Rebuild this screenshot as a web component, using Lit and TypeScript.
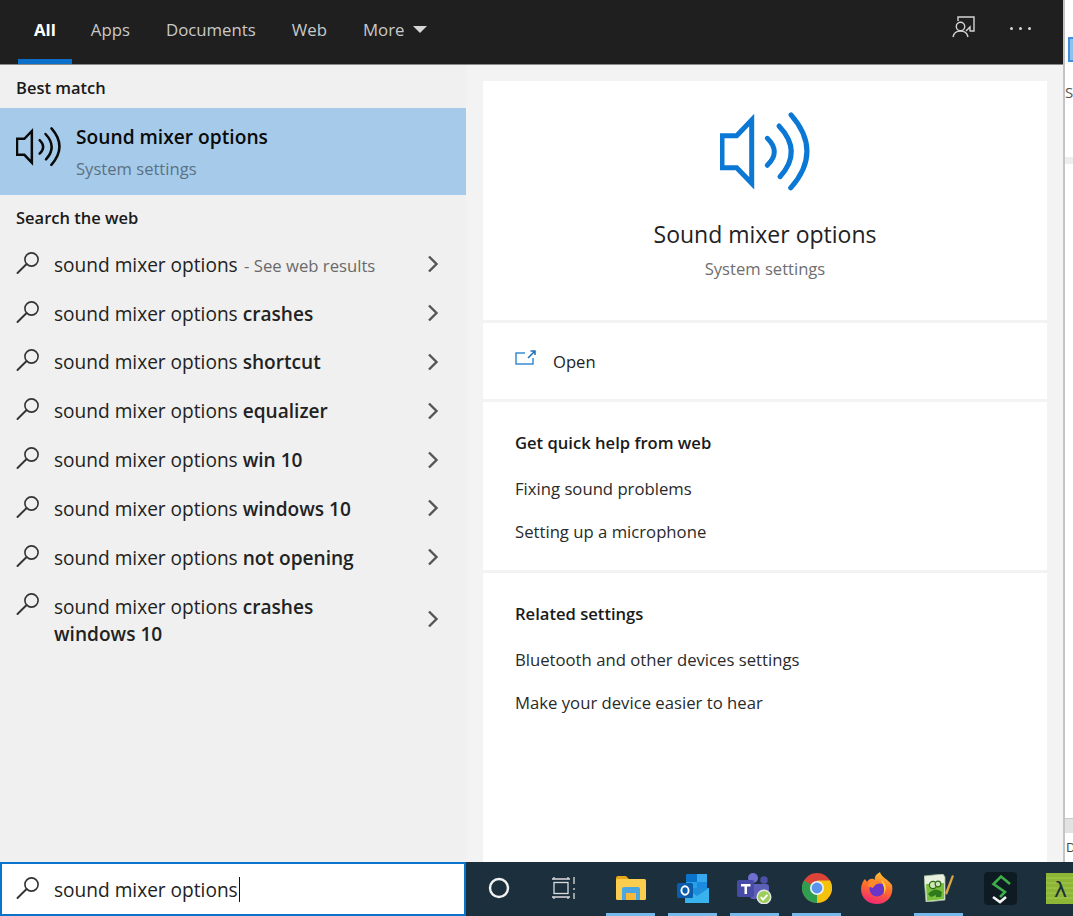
import {LitElement, html, css, svg} from 'lit';
import {customElement} from 'lit/decorators.js';

const webRows = [
  {plain: 'sound mixer options', bold: '', hint: ' - See web results'},
  {plain: 'sound mixer options ', bold: 'crashes'},
  {plain: 'sound mixer options ', bold: 'shortcut'},
  {plain: 'sound mixer options ', bold: 'equalizer'},
  {plain: 'sound mixer options ', bold: 'win 10'},
  {plain: 'sound mixer options ', bold: 'windows 10'},
  {plain: 'sound mixer options ', bold: 'not opening'},
];

const lens = svg`<circle cx="15.5" cy="8.5" r="6.6" fill="none" stroke="currentColor" stroke-width="1.6"/><path d="M10.6 13 L1.5 22" fill="none" stroke="currentColor" stroke-width="1.9" stroke-linecap="round"/>`;

// traced from the big blue one, the small black one is the same at half size
const speaker = svg`<g fill="none" stroke="currentColor" stroke-width="5" stroke-linecap="round">
  <path d="M2 23.7 H16.7 L31.7 8 V71.3 L16.7 55.7 H2 Z" stroke-linejoin="miter"/>
  <path d="M47.3 26.3 Q61.3 39.8 47.3 53.3"/>
  <path d="M59 14 Q83 39.5 60 64.7"/>
  <path d="M71 2.8 Q103 39.3 70.7 75.8"/>
</g>`;

@customElement('app-root')
export class AppRoot extends LitElement {
  static styles = css`
    :host {
      display: grid;
      width: 1073px;
      height: 916px;
      overflow: hidden;
      grid-template-columns: 466px 597px 10px;
      grid-template-rows: 65px 797px 54px;
      font-family: "Open Sans", "Noto Sans", sans-serif;
      color: #1a1a1a;
      background: #f2f2f2;
    }
    svg { display: block; flex: none; }

    /* top bar */
    .top {
      grid-column: 1 / 3;
      grid-row: 1;
      background: #1f1f1f;
      border-bottom: 1px solid #8a8a8a;
      box-sizing: border-box;
      display: flex;
      align-items: stretch;
      padding-left: 18px;
      color: #c9c9c9;
      font-size: 16.8px;
    }
    .tab { padding: 0 18px; display: flex; align-items: center; gap: 8px; padding-bottom: 6px; box-sizing: border-box; }
    .tab.on {
      padding-left: 16px;
      padding-right: 16px;
      margin-right: 1px;
      color: #fff;
      font-weight: 700;
      border-bottom: 5px solid #0a6fc9;
      padding-bottom: 1px;
    }
    .caret { width: 0; height: 0; border-left: 7px solid transparent; border-right: 7px solid transparent; border-top: 7px solid #d6d6d6; }
    .top-actions { margin-left: auto; display: flex; align-items: center; gap: 34px; padding: 0 32px 8px 0; }
    .dots { display: flex; gap: 6px; }
    .dots i { width: 3px; height: 3px; border-radius: 50%; background: #d6d6d6; }

    /* left list */
    .left { grid-column: 1; grid-row: 2; background: #f0f0f0; display: flex; flex-direction: column; }
    .heading { font-size: 16.5px; font-weight: 600; height: 43px; line-height: 45px; padding-left: 16px; color: #1a1a1a; }
    .heading.web { height: 45px; line-height: 45px; }
    .best { height: 87px; background: #a6cbea; display: flex; padding-left: 16px; color: #0a0a0a; }
    .best svg { margin-top: 19px; }
    .best-text { margin-left: 15px; padding-top: 15px; }
    .best-title { font-size: 19.2px; font-weight: 600; line-height: 28px; }
    .best-sub { font-size: 16.6px; line-height: 28px; margin-top: 4px; color: #5b7183; }
    .row { height: 48.8px; display: flex; align-items: center; padding: 0 27px 0 16px; font-size: 19.1px; color: #222; }
    .row.tall { height: 78px; line-height: 27px; }
    .row .lens { color: #333; margin-right: 14px; width: 24px; height: 24px; margin-top: -3px; }
    .row.tall .lens { align-self: flex-start; margin-top: 10px; }
    .row.tall .chev { margin-top: -3px; }
    .row span.label { flex: 1; padding-top: 1px; }
    .row b { font-weight: 600; }
    .row .hint { font-size: 16.7px; color: #6a6a6a; padding-left: 2px; }
    .chev { color: #555; }

    /* right preview */
    .right {
      grid-column: 2;
      grid-row: 2;
      background: #f3f3f3;
      padding: 16px 16px 0 17px;
      display: flex;
      flex-direction: column;
      gap: 3px;
    }
    .card { background: #fff; padding-left: 32px; }
    .hero { height: 239px; padding: 0; box-sizing: border-box; display: flex; flex-direction: column; align-items: center; }
    .hero svg { margin-top: 31px; color: #0a78d4; }
    .hero-title { font-size: 23px; line-height: 32px; margin-top: 26px; color: #222; }
    .hero-sub { font-size: 16.6px; line-height: 24px; margin-top: 7px; color: #6e6e6e; }
    .open { height: 76px; display: flex; align-items: center; gap: 17px; font-size: 16.6px; color: #222; }
    .open svg { color: #3a8dd3; margin-top: -7px; }
    .block { height: 168px; box-sizing: border-box; padding-top: 28px; }
    .block.grow { flex: 1; }
    .block h3 { margin: 0; font-size: 16.6px; line-height: 26px; font-weight: 600; color: #1a1a1a; }
    .block p { margin: 0; font-size: 16.7px; line-height: 26px; padding-top: 17px; color: #2a2a2a; }
    .block h3 + p { padding-top: 20px; }

    /* peek of the window behind */
    .peek {
      grid-column: 3;
      grid-row: 1 / 3;
      background: #fff;
      border-left: 2px solid #c4c4c4;
      box-sizing: border-box;
      display: flex;
      flex-direction: column;
      overflow: hidden;
      font-size: 15px;
      color: #555;
    }
    .peek-box { margin: 37px 0 0 3px; height: 25px; background: #8fc0ee; border: 2px solid #3f8fdc; border-right: 0; box-sizing: border-box; }
    .peek-text { margin-top: 20px; line-height: 20px; white-space: nowrap; }
    .peek-line { margin-top: 55px; height: 7px; background: #ededed; }
    .peek-band { margin-top: auto; height: 15px; background: #e2e2e2; border-top: 1px solid #c9c9c9; box-sizing: border-box; }
    .peek-end { height: 29px; line-height: 28px; font-size: 13px; white-space: nowrap; padding-left: 1px; color: #444; }

    /* search box and taskbar */
    .search {
      grid-column: 1;
      grid-row: 3;
      background: #fff;
      border: 2px solid #0a74cd;
      box-sizing: border-box;
      display: flex;
      align-items: center;
      padding-left: 14px;
      font-size: 19.1px;
      color: #222;
    }
    .search .lens { color: #333; margin-right: 14px; width: 24px; height: 24px; margin-top: -3px; }
    .search-text { padding-top: 1px; }
    .caret-bar { width: 1.5px; height: 25px; background: #111; margin-left: 1px; }
    .taskbar {
      grid-column: 2 / 4;
      grid-row: 3;
      background: #1c2f3d;
      display: flex;
      box-sizing: border-box;
      padding-left: 2px;
    }
    .slot { width: 62px; height: 54px; display: flex; align-items: center; justify-content: center; box-sizing: border-box; flex: none; padding-top: 1px; border-bottom: 3px solid transparent; }
    .slot.on { border-bottom-color: #76b9ed; width: 49px; margin: 0 6.5px; }
    .slot.cortana { margin-right: 3px; }
    .slot.tasks { margin-right: 4.5px; }
    .slot.firefox { margin-left: -2px; }
    .slot.lambda { justify-content: flex-start; padding-left: 14px; width: 40px; }
  `;

  render() {
    return html`
      <div class="top">
        <div class="tab on">All</div>
        <div class="tab">Apps</div>
        <div class="tab">Documents</div>
        <div class="tab">Web</div>
        <div class="tab">More<span class="caret"></span></div>
        <div class="top-actions">
          <svg width="24" height="24" viewBox="0 0 24 24" fill="none" stroke="#d4d4d4" stroke-width="1.4">
            <path d="M6 5 V1 H22 V15 H17.5 M14 15 L18 11 V15"/>
            <circle cx="8.5" cy="10.5" r="4.2"/>
            <path d="M1 21 C2 16 5 15 8.5 15 C12 15 15 16 16 21"/>
          </svg>
          <div class="dots"><i></i><i></i><i></i></div>
        </div>
      </div>

      <div class="left">
        <div class="heading">Best match</div>
        <div class="best">
          <svg width="45" height="40" viewBox="0 0 90 80">${speaker}</svg>
          <div class="best-text">
            <div class="best-title">Sound mixer options</div>
            <div class="best-sub">System settings</div>
          </div>
        </div>
        <div class="heading web">Search the web</div>
        ${webRows.map(r => html`
          <div class="row">
            <svg class="lens" viewBox="0 0 24 24">${lens}</svg>
            <span class="label">${r.plain}${r.bold ? html`<b>${r.bold}</b>` : ''}${r.hint ? html`<span class="hint">${r.hint}</span>` : ''}</span>
            ${this.chevron()}
          </div>`)}
        <div class="row tall">
          <svg class="lens" viewBox="0 0 24 24">${lens}</svg>
          <span class="label">sound mixer options <b>crashes<br>windows 10</b></span>
          ${this.chevron()}
        </div>
      </div>

      <div class="right">
        <div class="card hero">
          <svg width="90" height="80" viewBox="0 0 90 80">${speaker}</svg>
          <div class="hero-title">Sound mixer options</div>
          <div class="hero-sub">System settings</div>
        </div>
        <div class="card open">
          <svg width="21" height="16" viewBox="0 0 21 16" fill="none" stroke="currentColor" stroke-width="1.5">
            <path d="M10 3 H1 V14 H18 V8"/>
            <path d="M13 8 L20 1 M15.5 1 H20 V5" stroke="#1f6fb8"/>
          </svg>
          Open
        </div>
        <div class="card block">
          <h3>Get quick help from web</h3>
          <p>Fixing sound problems</p>
          <p>Setting up a microphone</p>
        </div>
        <div class="card block grow">
          <h3>Related settings</h3>
          <p>Bluetooth and other devices settings</p>
          <p>Make your device easier to hear</p>
        </div>
      </div>

      <div class="peek">
        <div class="peek-box"></div>
        <div class="peek-text">SI</div>
        <div class="peek-line"></div>
        <div class="peek-band"></div>
        <div class="peek-end">D</div>
      </div>

      <div class="search">
        <svg class="lens" viewBox="0 0 24 24">${lens}</svg>
        <span class="search-text">sound mixer options</span><span class="caret-bar"></span>
      </div>

      <div class="taskbar">
        <div class="slot cortana"><svg width="22" height="22" viewBox="0 0 22 22"><circle cx="11" cy="11" r="9" fill="none" stroke="#f2f2f2" stroke-width="2.4"/></svg></div>
        <div class="slot tasks">
          <svg width="26" height="24" viewBox="0 0 26 24" fill="none" stroke="#dcdcdc" stroke-width="1.3">
            <path d="M1 3 H19 M3 1 V3 M17 1 V3 M1 21 H19 M3 21 V23 M17 21 V23"/>
            <rect x="3" y="6.5" width="14" height="11"/>
            <path d="M23 1 V8 M23 12 V14 M23 17 V23"/>
          </svg>
        </div>
        <div class="slot on">
          <svg width="30" height="24" viewBox="0 0 30 24">
            <path d="M0 2 a2 2 0 0 1 2-2 H10 L13 3 H28 V8 H0 Z" fill="#e6a817"/>
            <rect x="0" y="3" width="30" height="21" rx="1.5" fill="#fbcd4f"/>
            <path d="M6 24 V13 a2 2 0 0 1 2-2 H22 a2 2 0 0 1 2 2 V24 H20 V17 H10 V24 Z" fill="#4aa6e0"/>
            <rect x="10" y="17" width="10" height="7" fill="#f6b73c"/>
          </svg>
        </div>
        <div class="slot on">
          <svg width="32" height="29" viewBox="0 0 32 29">
            <rect x="9" y="0" width="21" height="17" rx="1" fill="#0a74cd"/>
            <rect x="20" y="0" width="10" height="8" fill="#36a8eb"/>
            <rect x="9" y="8" width="11" height="9" fill="#28a0e5"/>
            <rect x="20" y="8" width="10" height="9" fill="#1a8be0"/>
            <path d="M8 14 L32 14 V28 a1 1 0 0 1-1 1 H9 a1 1 0 0 1-1-1 Z" fill="#1f8fdb"/>
            <path d="M8 14 L20 22 L32 14 V29 H8 Z" fill="#39b3ee"/>
            <rect x="0" y="9" width="16" height="15" rx="1.5" fill="#0b5cab"/>
            <ellipse cx="8" cy="16.5" rx="3.6" ry="4.2" fill="none" stroke="#fff" stroke-width="1.9"/>
          </svg>
        </div>
        <div class="slot on">
          <svg width="35" height="31" viewBox="0 0 35 31">
            <circle cx="16" cy="5" r="5" fill="#6f6fd0"/>
            <circle cx="27" cy="7" r="3.8" fill="#4e4fa6"/>
            <rect x="13" y="11" width="19" height="15" rx="3" fill="#5d5fb8"/>
            <rect x="0" y="7" width="17" height="17" rx="2" fill="#484aa8"/>
            <path d="M4 11 H13.5 V13.4 H10 V21 H7.5 V13.4 H4 Z" fill="#fff"/>
            <circle cx="27" cy="24" r="6.8" fill="#9ccf5a" stroke="#e6e6e6" stroke-width="1.4"/>
            <path d="M23.8 24 L26 26.6 L30.4 21.8" fill="none" stroke="#fff" stroke-width="1.9"/>
          </svg>
        </div>
        <div class="slot on">
          <svg width="30" height="30" viewBox="0 0 30 30">
            <circle cx="15" cy="15" r="15" fill="#db4437"/>
            <path d="M15 15 L15 30 A15 15 0 0 0 28 7.5 H15 Z" fill="#f4c20d"/>
            <path d="M15 15 L15 30 A15 15 0 0 1 2 7.5 Z" fill="#2f9e4f"/>
            <circle cx="15" cy="15" r="7" fill="#f4f4f4"/>
            <circle cx="15" cy="15" r="5.4" fill="#5b94ec"/>
          </svg>
        </div>
        <div class="slot firefox">
          <svg width="32" height="32" viewBox="0 0 32 32">
            <defs><linearGradient id="fx" x1="0.6" y1="0" x2="0.3" y2="1"><stop offset="0" stop-color="#ffc02e"/><stop offset="0.5" stop-color="#ff6a2c"/><stop offset="1" stop-color="#f0247a"/></linearGradient></defs>
            <path d="M19 0 C20 5 27 7 31 13 C33 24 26 32 16 32 C7 32 0 26 0 17 C0 13 2 9 4 7 L6 10 C8 6 12 6 14 8 C13 4 16 2 19 0 Z" fill="url(#fx)"/>
            <circle cx="16" cy="17" r="7.5" fill="#6a35c8"/>
            <path d="M7 12 C11 8 18 8 22 12 C17 10.5 14 12 12 16 L7 14 Z" fill="#ff8a2a"/>
            <path d="M20 8 C25 11 26 17 23 22 C24 16 22 12 20 8 Z" fill="#ffd23a"/>
          </svg>
        </div>
        <div class="slot on">
          <svg width="30" height="28" viewBox="0 0 30 28">
            <path d="M0 2 L19 0 L21 3 V26 L2 28 Z" fill="#e8f0df" stroke="#a5b89a" stroke-width="0.8"/>
            <path d="M2 10 L20 9 V25 L3 27 Z" fill="#79c13c"/>
            <circle cx="9" cy="11" r="3.6" fill="#cfe6b8" stroke="#2d6b18" stroke-width="1.2"/>
            <circle cx="14" cy="10" r="2.8" fill="#cfe6b8" stroke="#2d6b18" stroke-width="1.2"/>
            <path d="M4 20 Q11 12 18 18 L17 23 H12 V21 L7 23 Z" fill="#2f7a1c"/>
            <path d="M21 19 L28 1 L30 2 L23 21 Z" fill="#d9a441"/>
          </svg>
        </div>
        <div class="slot">
          <svg width="33" height="33" viewBox="0 0 33 33">
            <rect width="33" height="33" rx="4" fill="#0e1b22"/>
            <path d="M26 12 L17 4.5 L9.5 12 L21 20 L16 25" fill="none" stroke="#3fae4a" stroke-width="2.6"/>
            <path d="M9 25 L16 30 L22 25" fill="none" stroke="#f4f4f4" stroke-width="2.6"/>
          </svg>
        </div>
        <div class="slot lambda">
          <svg width="30" height="31" viewBox="0 0 30 31">
            <rect width="30" height="31" fill="#8db637"/>
            <path d="M0 5 H30 M0 10 H30 M0 15 H30 M0 20 H30 M0 25 H30" stroke="#a3c94e" stroke-width="1"/>
            <text x="8" y="24" font-size="22" fill="#1c2f3d" font-family="DejaVu Sans">λ</text>
          </svg>
        </div>
      </div>
    `;
  }

  chevron() {
    return html`<svg class="chev" width="12" height="18" viewBox="0 0 12 18" fill="none" stroke="currentColor" stroke-width="2.4"><path d="M2 1.5 L9.5 9 L2 16.5"/></svg>`;
  }
}
